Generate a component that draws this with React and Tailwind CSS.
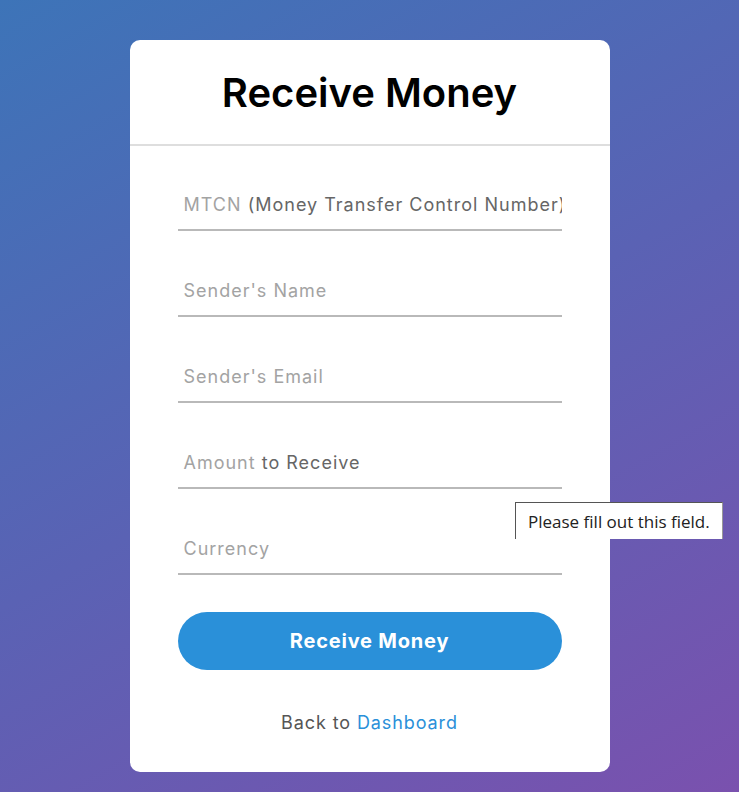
export default function App() {
  const fields = [
    { name: 'mtcn', light: 'MTCN', dark: ' (Money Transfer Control Number)' },
    { name: 'senderName', light: "Sender's Name", dark: '' },
    { name: 'senderEmail', light: "Sender's Email", dark: '' },
    { name: 'amount', light: 'Amount', dark: ' to Receive' },
    { name: 'currency', light: 'Currency', dark: '' },
  ];

  return (
    <div
      className="relative min-h-[792px] w-full bg-[linear-gradient(150deg,#3d74b8_0%,#5a62b4_50%,#7a51ae_100%)] pt-[40px]"
      style={{ fontFamily: '"Inter", "Noto Sans", sans-serif' }}
    >
      <div className="mx-auto w-[480px] overflow-hidden rounded-[10px] bg-white">
        <div className="flex h-[106px] items-center justify-center border-b-[2px] border-[#dedede] pt-[2px]">
          <h1 className="text-[40px] font-semibold text-black">Receive Money</h1>
        </div>

        <form className="px-[48px] pt-[33px] pb-[36px]" onSubmit={(e) => e.preventDefault()}>
          {fields.map((f) => (
            <div key={f.name} className="relative mb-[34px] h-[52px] border-b-[2px] border-[#b9b9b9]">
              <input
                type="text"
                name={f.name}
                className="h-full w-full bg-transparent pl-[6px] text-[18px] text-[#555] outline-none"
              />
              <div className="pointer-events-none absolute inset-0 flex items-center overflow-hidden whitespace-nowrap pl-[6px] pr-[4px] text-[18px] tracking-[1px]">
                <span className="text-[#a3a3a3]">{f.light}</span>
                {f.dark && <span className="whitespace-pre text-[#666]">{f.dark}</span>}
              </div>
            </div>
          ))}

          <button
            type="submit"
            className="mt-[3px] h-[58px] w-full rounded-full bg-[#2a90d9] text-[20px] font-bold tracking-[0.8px] text-white"
          >
            Receive Money
          </button>

          <p className="mt-[39px] text-center text-[18px] tracking-[0.9px] text-[#555]">
            Back to <a href="#" className="text-[#2a90d9]">Dashboard</a>
          </p>
        </form>
      </div>

      <div
        className="absolute left-[515px] top-[502px] h-[37px] w-[208px] border-l border-t border-r border-[#555] border-r-[#999] bg-white pl-[12px] pt-[6px] text-[17px] text-[#222]"
        style={{ fontFamily: '"Open Sans", "Noto Sans", sans-serif' }}
      >
        Please fill out this field.
      </div>
    </div>
  );
}
